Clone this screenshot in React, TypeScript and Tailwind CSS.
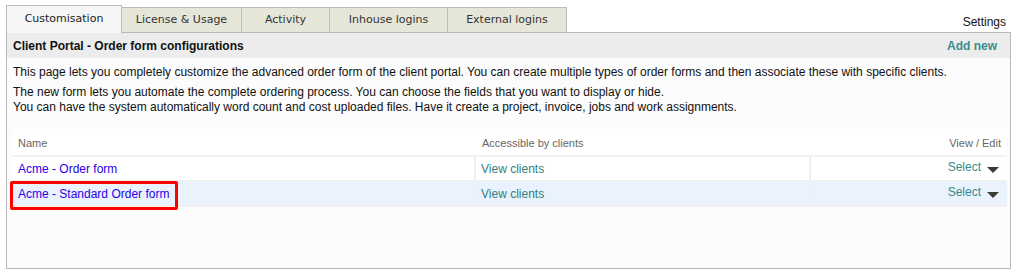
import React from 'react'

const tabs = [
    { label: 'Customisation', width: 'w-[116px]', active: true },
    { label: 'License & Usage', width: 'w-[120px]' },
    { label: 'Activity', width: 'w-[88px]' },
    { label: 'Inhouse logins', width: 'w-[118px]' },
    { label: 'External logins', width: 'w-[119px]' },
]

const rows = [
    { name: 'Acme - Order form', bg: 'bg-white' },
    { name: 'Acme - Standard Order form', bg: 'bg-[#eaf2fd]' },
]

const Caret = () => (
    <svg width="12" height="7" viewBox="0 0 12 7" className="ml-[6px] mt-[4px]">
        <path d="M0 0 L12 0 L6 6 Z" fill="#3d3a36" />
    </svg>
)

const App: React.FC = () => {
    return (
        <div className="w-[1014px] h-[277px] bg-white font-['Liberation_Sans',Arial,sans-serif] text-[12px] text-[#111]">
            {/* tabs */}
            <div className="flex items-end h-[32px] pl-[6px] pr-[8px]">
                {tabs.map((t) => (
                    <div
                        key={t.label}
                        className={
                            t.active
                                ? `${t.width} h-[28px] bg-[#f6f6f6] border border-b-0 border-[#bcbcbc] flex items-center justify-center font-['DejaVu_Sans',Verdana,sans-serif] text-[11px] text-[#222] -mb-px relative z-10`
                                : `${t.width} h-[25px] bg-[#e6e6d8] border border-l-0 border-b-0 border-[#bcbcbc] flex items-center justify-center font-['DejaVu_Sans',Verdana,sans-serif] text-[11px] text-[#333]`
                        }
                    >
                        {t.label}
                    </div>
                ))}
                <div className="ml-auto mb-[1px] text-[12px] text-[#111]">Settings</div>
            </div>

            {/* panel */}
            <div className="ml-[6px] mr-[3px] h-[237px] border border-[#b9b9b9] bg-[#fcfcfc]">
                <div className="h-[25px] bg-[#ececec] flex items-center justify-between pl-[6px] pr-[13px] font-bold">
                    <span>Client Portal - Order form configurations</span>
                    <span className="text-[#3a8c8c]">Add new</span>
                </div>

                <div className="px-[6px] pt-[7px] leading-[15px]">
                    <p>This page lets you completely customize the advanced order form of the client portal. You can create multiple types of order forms and then associate these with specific clients.</p>
                    <p className="mt-[5px]">
                        The new form lets you automate the complete ordering process. You can choose the fields that you want to display or hide.
                        <br />
                        You can have the system automatically word count and cost uploaded files. Have it create a project, invoice, jobs and work assignments.
                    </p>
                </div>

                {/* table */}
                <div className="relative mt-[14px] ml-[6px] mr-[3px] bg-white">
                    <div className="flex items-end h-[28px] pb-[4px] border-b-2 border-[#f0f0f0] text-[11px] text-[#666]">
                        <div className="w-[463px] pl-[5px]">Name</div>
                        <div className="w-[335px] pl-[6px]">Accessible by clients</div>
                        <div className="flex-1 text-right pr-[6px]">View / Edit</div>
                    </div>
                    {rows.map((r) => (
                        <div key={r.name} className={`flex h-[25px] ${r.bg} border-b-2 border-[#f0f0f0]`}>
                            <div className="w-[463px] pl-[5px] flex items-center border-r-2 border-[#f0f0f0] text-[#2a00e8]">{r.name}</div>
                            <div className="w-[335px] pl-[5px] flex items-center border-r-2 border-[#f0f0f0] text-[#2f8080]">View clients</div>
                            <div className="flex-1 flex items-center justify-end pr-[8px] text-[#3a8c8c]">
                                <span className="-mt-[3px]">Select</span>
                                <Caret />
                            </div>
                        </div>
                    ))}
                    {/* highlight box */}
                    <div className="absolute left-[-3px] top-[52px] w-[168px] h-[29px] border-[3px] border-[#ff0000] rounded-[2px]" />
                </div>
            </div>
        </div>
    )
}

export default App
